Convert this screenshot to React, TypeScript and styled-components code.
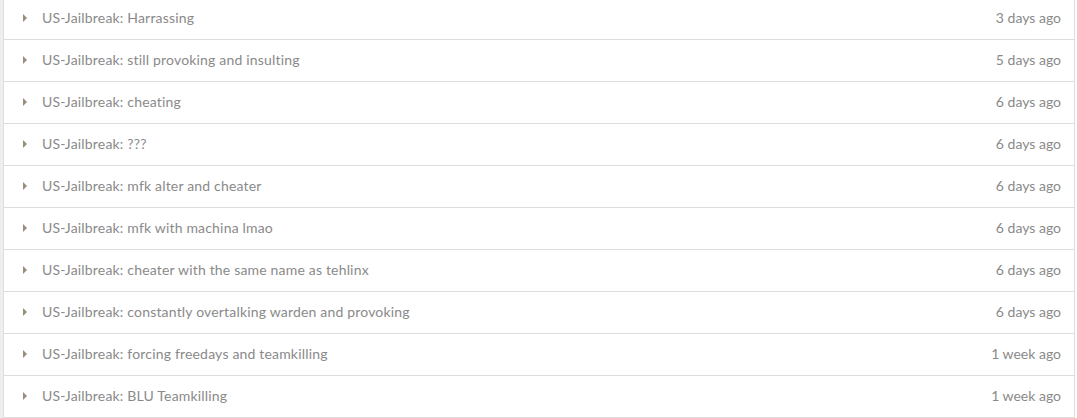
import * as React from 'react'
import styled, { createGlobalStyle } from 'styled-components'

const GlobalStyle = createGlobalStyle`
  html, body {
    margin: 0;
    padding: 0;
    background: #ffffff;
  }
  body {
    font-family: Lato, "Liberation Sans", sans-serif;
  }
`

const Page = styled.div`
  border-left: 3px solid #eeeeee;
  padding-right: 2px;
  overflow: hidden;
  height: 418px;
  box-sizing: border-box;
`

const List = styled.ul`
  list-style: none;
  margin: -2px 0 0 0;
  padding: 0;
  border-left: 1px solid #dddddd;
  border-right: 1px solid #dddddd;
`

const Row = styled.li`
  display: flex;
  align-items: center;
  height: 41px;
  border-bottom: 1px solid #dddddd;
  padding: 0 13px 0 19px;
  font-size: 14px;
  line-height: 20px;
  color: #8a8a8a;
  cursor: pointer;
`

const Caret = styled.span`
  width: 0;
  height: 0;
  border-top: 4px solid transparent;
  border-bottom: 4px solid transparent;
  border-left: 4px solid #968e7e;
  margin-right: 15px;
  margin-top: -2px;
`

const Title = styled.span`
  flex: 1;
  letter-spacing: 0.18px;
  margin-top: -1px;
`

const When = styled.span`
  white-space: nowrap;
  margin-top: -1px;
`

const reports = [
  { title: 'Harrassing', when: '3 days ago' },
  { title: 'still provoking and insulting', when: '5 days ago' },
  { title: 'cheating', when: '6 days ago' },
  { title: '???', when: '6 days ago' },
  { title: 'mfk alter and cheater', when: '6 days ago' },
  { title: 'mfk with machina lmao', when: '6 days ago' },
  { title: 'cheater with the same name as tehlinx', when: '6 days ago' },
  { title: 'constantly overtalking warden and provoking', when: '6 days ago' },
  { title: 'forcing freedays and teamkilling', when: '1 week ago' },
  { title: 'BLU Teamkilling', when: '1 week ago' },
]

export default function App() {
  return (
    <>
      <GlobalStyle />
      <Page>
        <List>
          {reports.map((r, i) => (
            <Row key={i}>
              <Caret />
              <Title>US-Jailbreak: {r.title}</Title>
              <When>{r.when}</When>
            </Row>
          ))}
        </List>
      </Page>
    </>
  )
}
